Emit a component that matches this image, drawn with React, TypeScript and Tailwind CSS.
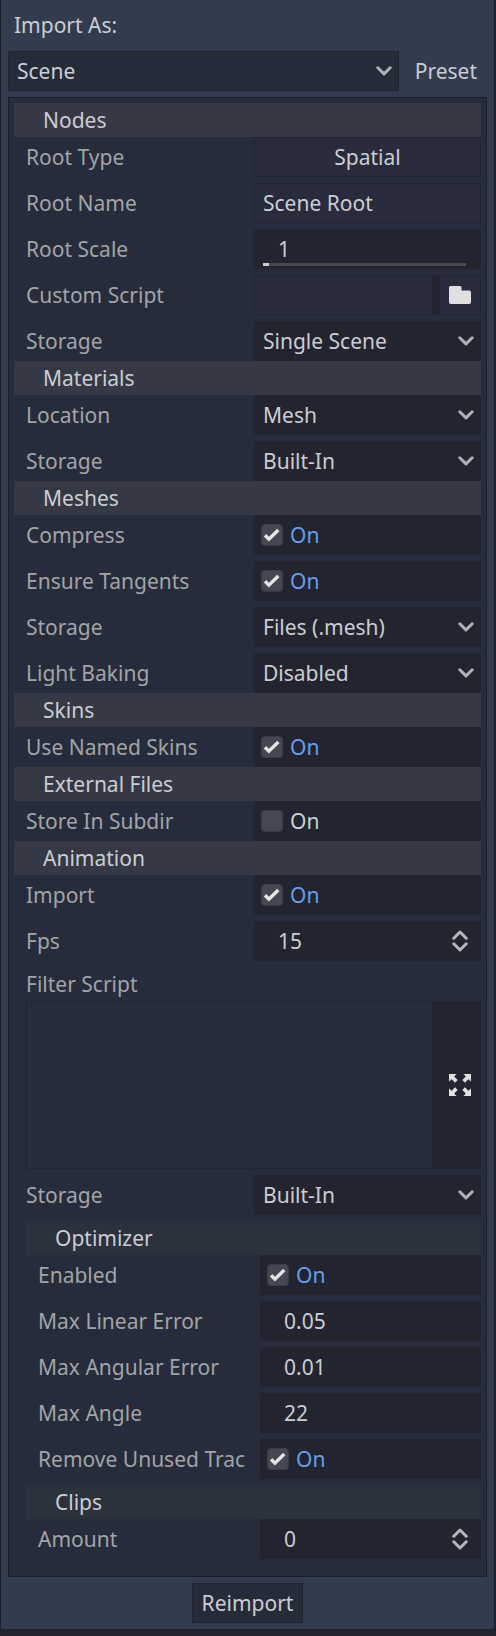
import { useId, type ReactNode } from "react";

const value = "h-10 w-full bg-[#222530] text-[#cbcdd2] outline-none";

function Chevron() {
  return (
    <svg
      className="pointer-events-none absolute top-[15px] right-[7px] h-[10px] w-4"
      viewBox="0 0 16 10"
      fill="none"
      stroke="#b0b2b6"
      strokeWidth="3"
      strokeLinecap="round"
      strokeLinejoin="round"
      aria-hidden="true"
    >
      <path d="M1.8 1.8 8 7.9l6.2-6.1" />
    </svg>
  );
}

function SpinArrows() {
  return (
    <svg
      className="pointer-events-none absolute top-[9px] right-[13px] h-[22px] w-4"
      viewBox="0 0 16 22"
      fill="none"
      stroke="#b5b7ba"
      strokeWidth="3"
      strokeLinecap="round"
      strokeLinejoin="round"
      aria-hidden="true"
    >
      <path d="M1.8 8.2 8 2l6.2 6.2M1.8 13.8 8 20l6.2-6.2" />
    </svg>
  );
}

function FolderIcon() {
  return (
    <svg className="h-[18px] w-[22px]" viewBox="0 0 22 18" fill="#e0e0e0" aria-hidden="true">
      <path d="M1.5 0H11a1.5 1.5 0 0 1 1.5 1.5v3h7.6A1.9 1.9 0 0 1 22 6.4v9.7a1.9 1.9 0 0 1-1.9 1.9H1.9A1.9 1.9 0 0 1 0 16.1V1.5A1.5 1.5 0 0 1 1.5 0Z" />
    </svg>
  );
}

function ExpandIcon() {
  return (
    <svg className="size-[22px]" viewBox="0 0 22 22" fill="#e0e0e0" aria-hidden="true">
      <path d="M0 0h7.5L5.2 2.6 8.7 6.1 6.1 8.7 2.6 5.2 0 7.5Z" />
      <path d="M22 0h-7.5l2.3 2.6-3.5 3.5 2.6 2.6 3.5-3.5L22 7.5Z" />
      <path d="M0 22h7.5l-2.3-2.6 3.5-3.5-2.6-2.6-3.5 3.5L0 14.5Z" />
      <path d="M22 22h-7.5l2.3-2.6-3.5-3.5 2.6-2.6 3.5 3.5L22 14.5Z" />
    </svg>
  );
}

function Heading({ children, nested = false }: { children: ReactNode; nested?: boolean }) {
  return (
    <h2 className={`pl-[29px] leading-[34px] text-[#cbcdd2] ${nested ? "mt-[6px] bg-[#2c313e]" : "bg-[#343945]"}`}>
      {children}
    </h2>
  );
}

function Rows({ children, nested = false }: { children: ReactNode; nested?: boolean }) {
  return (
    <div
      className={`grid items-center gap-y-[6px] ${
        nested ? "grid-cols-[minmax(0,234fr)_minmax(0,221fr)]" : "grid-cols-[minmax(0,240fr)_minmax(0,227fr)]"
      }`}
    >
      {children}
    </div>
  );
}

function Label({ id, children }: { id: string; children: ReactNode }) {
  return (
    <label htmlFor={id} className="mr-[10px] overflow-hidden pl-3 leading-[39px] whitespace-nowrap text-[#a2a4a6]">
      {children}
    </label>
  );
}

function SelectRow({ label, options }: { label: string; options: string[] }) {
  const id = useId();
  return (
    <>
      <Label id={id}>{label}</Label>
      <div className="relative">
        <select id={id} className={`${value} appearance-none px-[9px]`}>
          {options.map((o) => (
            <option key={o}>{o}</option>
          ))}
        </select>
        <Chevron />
      </div>
    </>
  );
}

function CheckRow({ label, on = true }: { label: string; on?: boolean }) {
  const id = useId();
  return (
    <>
      <Label id={id}>{label}</Label>
      <div className="flex h-10 items-center gap-[7px] bg-[#222530] pl-[7px]">
        <span className="grid size-[22px]">
          <input
            id={id}
            type="checkbox"
            defaultChecked={on}
            className="peer col-start-1 row-start-1 size-[22px] appearance-none rounded border border-[#3a3d47] bg-[#454852]"
          />
          <svg
            className="pointer-events-none invisible col-start-1 row-start-1 size-[22px] peer-checked:visible"
            viewBox="0 0 22 22"
            fill="none"
            stroke="#e4e4e4"
            strokeWidth="3.4"
            aria-hidden="true"
          >
            <path d="M4 11.2 7.9 15.2 17.3 6" strokeLinejoin="miter" />
          </svg>
        </span>
        <label htmlFor={id} className={on ? "text-[#699ce8]" : "text-[#cbcdd2]"}>
          On
        </label>
      </div>
    </>
  );
}

function NumberRow({ label, amount, spin = false }: { label: string; amount: string; spin?: boolean }) {
  const id = useId();
  return (
    <>
      <Label id={id}>{label}</Label>
      <div className="relative">
        <input id={id} inputMode="decimal" defaultValue={amount} className={`${value} px-6`} />
        {spin && <SpinArrows />}
      </div>
    </>
  );
}

export default function App() {
  return (
    <div className="bg-[#20242e] pr-px pb-[6px] font-['Noto_Sans',sans-serif] text-[21px] leading-[30px]">
      <main className="border border-t-0 border-[#1a1e2a] bg-[#333b4f] px-[7px] pt-[10px] pb-[6px]">
        <label htmlFor="import-as" className="block pl-[6px] text-[#cbcdd2]">
          Import As:
        </label>
        <div className="mt-[11px] flex gap-[6px]">
          <div className="relative flex-1">
            <select
              id="import-as"
              className="h-10 w-full appearance-none border border-[#212531] bg-[#262b3a] px-2 text-[#cbcdd2] outline-none"
            >
              <option>Scene</option>
            </select>
            <Chevron />
          </div>
          <button type="button" className="px-[10px] text-[#cbcdd2]">
            Preset
          </button>
        </div>

        <form className="mt-[6px] border border-[#1a1e2a] bg-[#262c3b] px-[5px] pt-[5px] pb-[17px]">
          <Heading>Nodes</Heading>
          <Rows>
            <Label id="root-type">Root Type</Label>
            <button
              id="root-type"
              type="button"
              className="h-10 border border-[#222530] bg-[#272b3b] text-center text-[#cbcdd2]"
            >
              Spatial
            </button>
            <Label id="root-name">Root Name</Label>
            <input
              id="root-name"
              defaultValue="Scene Root"
              className="h-10 w-full border border-[#222530] bg-[#272b3b] px-2 text-[#cbcdd2] outline-none"
            />
            <Label id="root-scale">Root Scale</Label>
            <div className="grid">
              <input
                id="root-scale"
                inputMode="decimal"
                defaultValue="1"
                className={`${value} col-start-1 row-start-1 px-6`}
              />
              <input
                type="range"
                aria-label="Root Scale slider"
                min="0"
                max="100"
                defaultValue="0"
                className="col-start-1 row-start-1 mr-[15px] mb-[3px] ml-[9px] h-[3px] appearance-none self-end bg-[#474a54] [&::-webkit-slider-thumb]:h-[3px] [&::-webkit-slider-thumb]:w-[6px] [&::-webkit-slider-thumb]:appearance-none [&::-webkit-slider-thumb]:bg-[#cbcdd2]"
              />
            </div>
            <Label id="custom-script">Custom Script</Label>
            <div className="flex h-10 gap-2 bg-[#222530] p-px">
              <input id="custom-script" className="min-w-0 flex-1 bg-[#272b3b] px-2 text-[#cbcdd2] outline-none" />
              <button type="button" aria-label="Browse" className="flex w-10 items-center justify-center bg-[#272b3b]">
                <FolderIcon />
              </button>
            </div>
            <SelectRow label="Storage" options={["Single Scene"]} />
          </Rows>

          <Heading>Materials</Heading>
          <Rows>
            <SelectRow label="Location" options={["Mesh"]} />
            <SelectRow label="Storage" options={["Built-In"]} />
          </Rows>

          <Heading>Meshes</Heading>
          <Rows>
            <CheckRow label="Compress" />
            <CheckRow label="Ensure Tangents" />
            <SelectRow label="Storage" options={["Files (.mesh)"]} />
            <SelectRow label="Light Baking" options={["Disabled"]} />
          </Rows>

          <Heading>Skins</Heading>
          <Rows>
            <CheckRow label="Use Named Skins" />
          </Rows>

          <Heading>External Files</Heading>
          <Rows>
            <CheckRow label="Store In Subdir" on={false} />
          </Rows>

          <Heading>Animation</Heading>
          <Rows>
            <CheckRow label="Import" />
            <NumberRow label="Fps" amount="15" spin />
          </Rows>
          <div className="mt-[6px] mb-[6px] pl-3">
            <label htmlFor="filter-script" className="block leading-[34px] text-[#a2a4a6]">
              Filter Script
            </label>
            <div className="flex h-[168px] bg-[#222530]">
              <textarea
                id="filter-script"
                className="flex-1 resize-none border border-[#222530] bg-[#262c3b] p-2 text-[#cbcdd2] outline-none"
              />
              <button type="button" aria-label="Expand editor" className="flex w-12 items-center justify-center pl-[6px]">
                <ExpandIcon />
              </button>
            </div>
          </div>
          <Rows>
            <SelectRow label="Storage" options={["Built-In"]} />
          </Rows>

          <div className="pl-3">
            <Heading nested>Optimizer</Heading>
            <Rows nested>
              <CheckRow label="Enabled" />
              <NumberRow label="Max Linear Error" amount="0.05" />
              <NumberRow label="Max Angular Error" amount="0.01" />
              <NumberRow label="Max Angle" amount="22" />
              <CheckRow label="Remove Unused Trac" />
            </Rows>
            <Heading nested>Clips</Heading>
            <Rows nested>
              <NumberRow label="Amount" amount="0" spin />
            </Rows>
          </div>
        </form>

        <div className="mt-[6px] flex justify-center">
          <button type="button" className="h-10 border border-[#212531] bg-[#262b3a] px-[9px] text-[#cbcdd2]">
            Reimport
          </button>
        </div>
      </main>
    </div>
  );
}
